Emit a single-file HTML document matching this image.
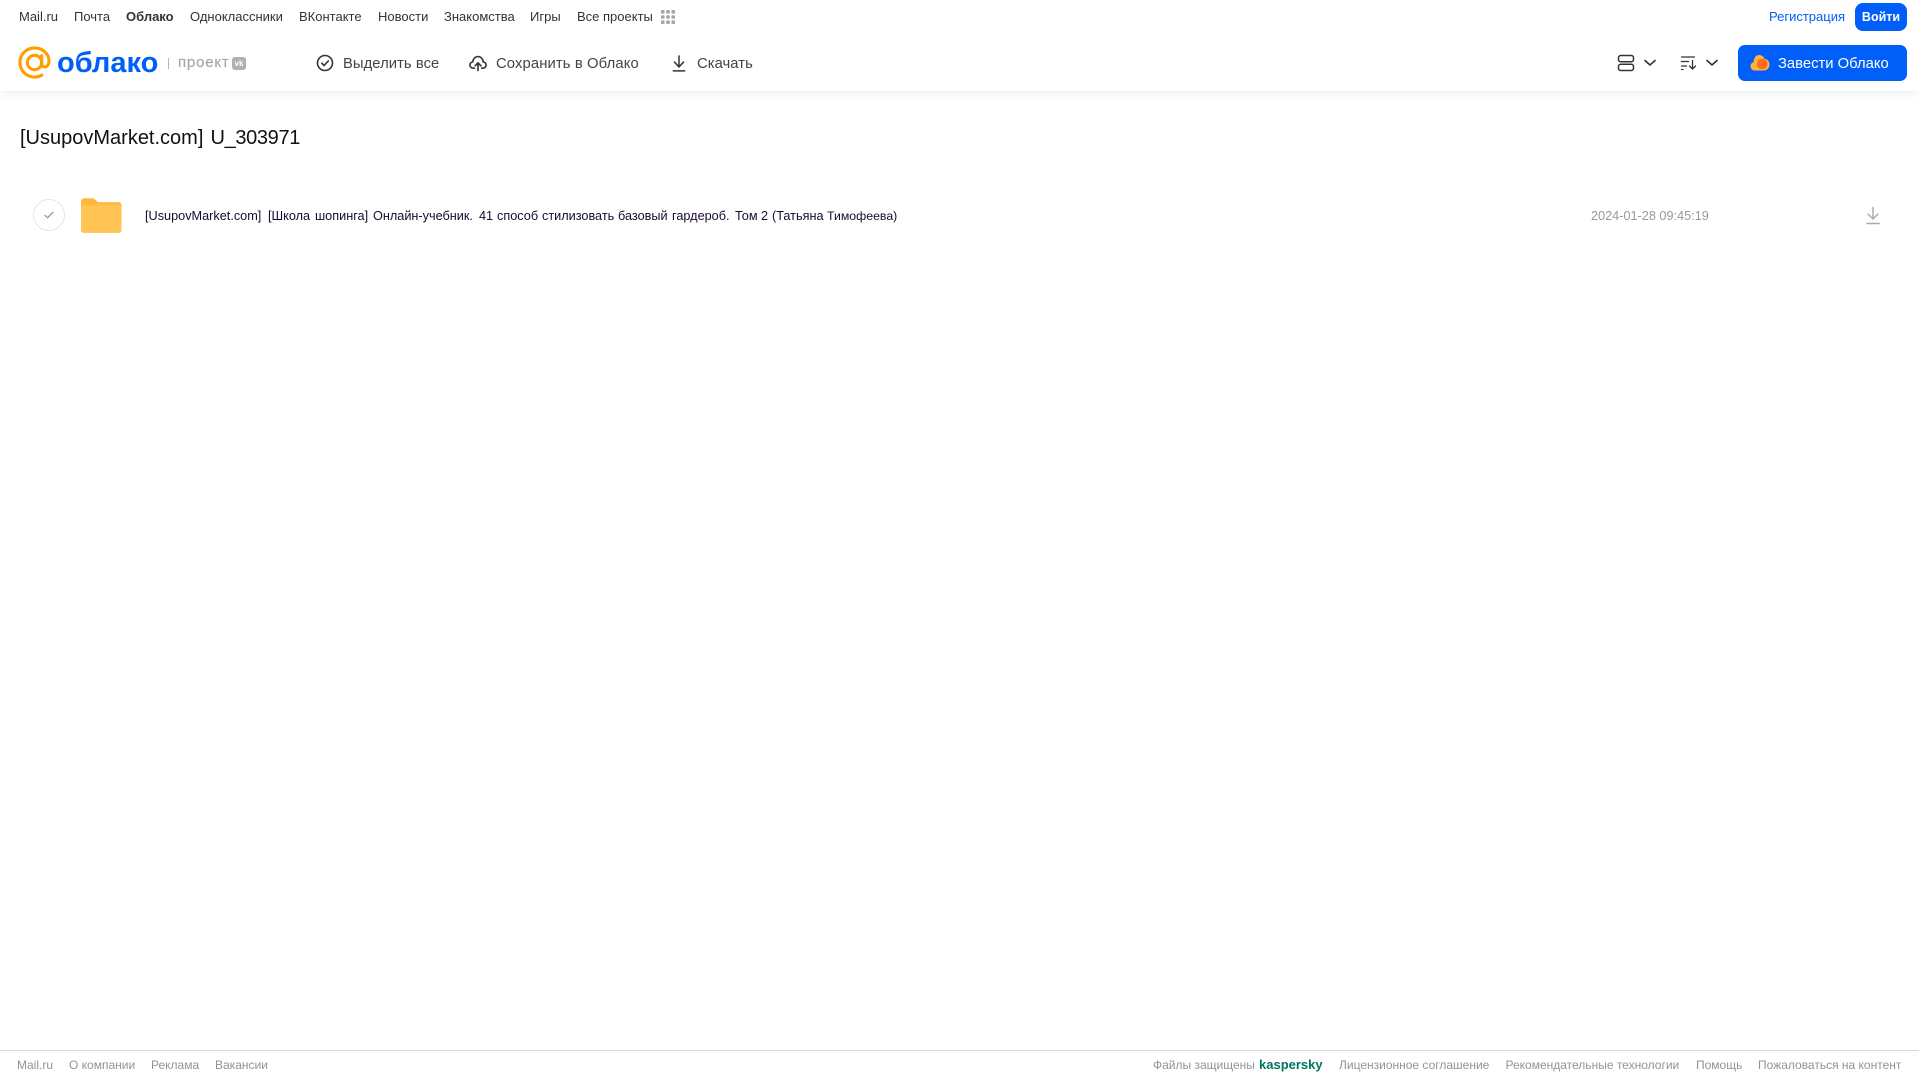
<!DOCTYPE html>
<html lang="ru">
<head>
<meta charset="utf-8">
<title>Облако</title>
<style>
html,body{margin:0;padding:0;background:#fff}
body{position:relative;width:1919px;height:1079px;overflow:hidden;font-family:"Liberation Sans",sans-serif;color:#2c2d2e}
.t{position:absolute;white-space:nowrap;line-height:20px}
.n{top:7px;font-size:13px;color:#333}
.b{top:53.500px;font-size:14.800px;color:#444;letter-spacing:.05px}
.f{top:1055px;font-size:12px;color:#919399}
.r{top:205.500px;font-size:12.700px;color:#1a0a2e}
svg{position:absolute;display:block}
#hd{position:absolute;left:0;top:0;width:1919px;height:91px;background:#fff;box-shadow:0 2px 8px rgba(0,0,0,.07)}
</style>
</head>
<body>
<div id="hd"></div>

<div class="t n" style="left:19px">Mail.ru</div>
<div class="t n" style="left:74px">Почта</div>
<div class="t n" style="left:126px;font-weight:bold">Облако</div>
<div class="t n" style="left:190px">Одноклассники</div>
<div class="t n" style="left:299px">ВКонтакте</div>
<div class="t n" style="left:378px">Новости</div>
<div class="t n" style="left:444px">Знакомства</div>
<div class="t n" style="left:530px">Игры</div>
<div class="t n" style="left:577px">Все проекты</div>
<svg style="left:660px;top:9px" width="16" height="16" viewBox="0 0 16 16" fill="#a5a5a5">
<rect x="1" y="1" width="3.600" height="3.600" rx="1"/><rect x="6.200" y="1" width="3.600" height="3.600" rx="1"/><rect x="11.400" y="1" width="3.600" height="3.600" rx="1"/>
<rect x="1" y="6.200" width="3.600" height="3.600" rx="1"/><rect x="6.200" y="6.200" width="3.600" height="3.600" rx="1"/><rect x="11.400" y="6.200" width="3.600" height="3.600" rx="1"/>
<rect x="1" y="11.400" width="3.600" height="3.600" rx="1"/><rect x="6.200" y="11.400" width="3.600" height="3.600" rx="1"/><rect x="11.400" y="11.400" width="3.600" height="3.600" rx="1"/>
</svg>

<div class="t" style="left:1769px;top:7px;font-size:13px;color:#005ff9">Регистрация</div>
<div style="position:absolute;left:1855px;top:3px;width:52px;height:28px;border-radius:8px;background:#005ff9"></div>
<div class="t" style="left:1855px;top:7px;width:52px;text-align:center;font-size:12.500px;font-weight:bold;color:#fff">Войти</div>

<!-- logo -->
<svg style="left:18px;top:46px" width="33" height="33" viewBox="0 0 34 34" fill="none" stroke="#ff9e00">
<circle cx="17" cy="17" r="7.400" stroke-width="3.200"/>
<path d="M24.400 10v8.500c0 4.400 6.600 4.400 7.400-1.500C32.800 8.500 25.500 2 17 2 8.700 2 2 8.700 2 17s6.700 15 15 15c3 0 5.400-.7 7.600-2" stroke-width="3.200" stroke-linecap="round"/>
</svg>
<div class="t" style="left:57px;top:44.500px;line-height:36px;font-size:29px;font-weight:bold;color:#005ff9">облако</div>
<div style="position:absolute;left:168px;top:58px;width:1px;height:11px;background:#b5b5b5"></div>
<div class="t" style="left:178px;top:52.500px;font-size:15px;color:#a8a8a8;letter-spacing:.8px;-webkit-text-stroke:.2px #a8a8a8">проект</div>
<div style="position:absolute;left:232px;top:57px;width:14px;height:13px;border-radius:3px;background:#b0b0b0;color:#fff;font-size:8px;font-weight:bold;line-height:13px;text-align:center">vk</div>

<!-- toolbar -->
<svg style="left:316px;top:54px" width="18" height="18" viewBox="0 0 18 18" fill="none" stroke="#333" stroke-width="1.600">
<circle cx="9" cy="9" r="7.500"/><path d="M5.800 9.200l2.300 2.300 4.200-4.500" stroke-linecap="round" stroke-linejoin="round"/>
</svg>
<div class="t b" style="left:343px">Выделить все</div>

<svg style="left:469px;top:55px" width="18" height="16.500" viewBox="0 0 20 18" fill="none" stroke="#333" stroke-width="1.800" stroke-linecap="round" stroke-linejoin="round">
<path d="M6 14.500H4.800C2.700 14.500 1 13 1 11c0-1.800 1.300-3.200 3.100-3.500C4.500 4 7 1.500 10 1.500s5.500 2.500 5.900 6c1.800.3 3.100 1.700 3.100 3.500 0 2-1.700 3.500-3.800 3.500H14"/>
<path d="M10 17V9M6.800 11.800L10 8.500l3.200 3.300"/>
</svg>
<div class="t b" style="left:496px;letter-spacing:.12px">Сохранить в Облако</div>

<svg style="left:672px;top:54.500px" width="14" height="17" viewBox="0 0 16 18" preserveAspectRatio="none" fill="none" stroke="#333" stroke-width="1.700" stroke-linecap="round" stroke-linejoin="round">
<path d="M8 1v11.500M2.800 7.500L8 12.700l5.200-5.200"/><path d="M1.500 16.800h13"/>
</svg>
<div class="t b" style="left:697px">Скачать</div>

<!-- view / sort -->
<svg style="left:1617px;top:54px" width="18" height="18" viewBox="0 0 18 18" fill="none" stroke="#333" stroke-width="1.500">
<rect x="1.500" y="1.500" width="15" height="6.200" rx="2.200"/><rect x="1.500" y="10.300" width="15" height="6.200" rx="2.200"/>
</svg>
<svg style="left:1643px;top:58px" width="14" height="10" viewBox="0 0 14 10" fill="none" stroke="#333" stroke-width="1.600" stroke-linecap="round" stroke-linejoin="round"><path d="M2 2.500l5 4.500 5-4.500"/></svg>
<svg style="left:1680px;top:55px" width="18" height="16" viewBox="0 0 18 16" fill="none" stroke="#333" stroke-width="1.300" stroke-linecap="round" stroke-linejoin="round">
<path d="M1.500 2h13M1.500 6.500h7M1.500 11h5M1.500 14.500h1.500"/><path d="M12.500 5.500V14M9.500 11l3 3 3-3"/>
</svg>
<svg style="left:1705px;top:58px" width="14" height="10" viewBox="0 0 14 10" fill="none" stroke="#333" stroke-width="1.600" stroke-linecap="round" stroke-linejoin="round"><path d="M2 2.500l5 4.500 5-4.500"/></svg>

<div style="position:absolute;left:1738px;top:45px;width:169px;height:36px;border-radius:7px;background:#005ff9"></div>
<svg style="left:1750px;top:54px" width="20" height="17" viewBox="0 0 20 17">
<path d="M5 16.500C2.200 16.500 .5 14.500 .5 12.200c0-2 1.300-3.600 3-4C3.800 4 6 1 9 1c2.600 0 4.500 1.500 5.400 3.700 3 .2 5.100 2.700 5.100 5.800 0 3.300-2.500 6-5.700 6z" fill="#ffb23e"/>
<circle cx="12.300" cy="10" r="5.300" fill="#ff6a1f"/>
</svg>
<div class="t" style="left:1778px;top:53.500px;font-size:14.800px;color:#fff">Завести Облако</div>

<!-- title -->
<div class="t" style="left:20px;top:126px;line-height:24px;font-size:20px;color:#111">[UsupovMarket.com]</div>
<div class="t" style="left:210.500px;top:126px;line-height:24px;font-size:20px;color:#111;letter-spacing:-.35px">U_303971</div>

<!-- row -->
<div style="position:absolute;left:33px;top:199px;width:30px;height:30px;border:1px solid #e6e6e6;border-radius:50%"></div>
<svg style="left:42px;top:209px" width="14" height="12" viewBox="0 0 14 12" fill="none" stroke="#999" stroke-width="1.300" stroke-linecap="round" stroke-linejoin="round"><path d="M3 6.300l2.600 2.500L11 3.200"/></svg>
<svg style="left:81px;top:198px" width="40.500" height="35" viewBox="0 0 41 35">
<path d="M0 3.500C0 1.500 1.500 0 3.500 0h8c1.300 0 2.300.5 3.200 1.500L17 4h21c1.700 0 3 1.300 3 3v25c0 1.700-1.300 3-3 3H3c-1.700 0-3-1.300-3-3z" fill="#ffb83d"/>
<path d="M0 9c0-1.100.9-2 2-2h37c1.100 0 2 .9 2 2v23c0 1.700-1.300 3-3 3H3c-1.700 0-3-1.300-3-3z" fill="#ffc454"/>
</svg>
<div class="t r" style="left:145px">[UsupovMarket.com]</div>
<div class="t r" style="left:268px">[Школа</div>
<div class="t r" style="left:315px">шопинга]</div>
<div class="t r" style="left:373px">Онлайн-учебник.</div>
<div class="t r" style="left:479px">41</div>
<div class="t r" style="left:497px">способ</div>
<div class="t r" style="left:542px">стилизовать</div>
<div class="t r" style="left:618px">базовый</div>
<div class="t r" style="left:672px">гардероб.</div>
<div class="t r" style="left:735px">Том</div>
<div class="t r" style="left:761px">2</div>
<div class="t r" style="left:772px">(Татьяна</div>
<div class="t r" style="left:827px;font-size:12.300px">Тимофеева)</div>
<div class="t" style="left:1591px;top:205.500px;font-size:12.700px;color:#999">2024-01-28 09:45:19</div>
<svg style="left:1866px;top:206px" width="14" height="20" viewBox="0 0 14 20" fill="none" stroke="#a8a8a8" stroke-width="1.400" stroke-linecap="round" stroke-linejoin="round">
<path d="M7 1.500v11.500M2 8l5 5 5-5"/><path d="M1 17.500h12" stroke-width="1.600"/>
</svg>

<!-- footer -->
<div style="position:absolute;left:0;top:1050px;width:1919px;height:1px;background:#d8d8d8"></div>
<div class="t f" style="left:17px">Mail.ru</div>
<div class="t f" style="left:69px">О компании</div>
<div class="t f" style="left:151px">Реклама</div>
<div class="t f" style="left:215px">Вакансии</div>
<div class="t f" style="left:1153px">Файлы защищены</div>
<div class="t f" style="left:1259px;font-weight:bold;font-size:13px;color:#00755f">kaspersky</div>
<div class="t f" style="left:1339px">Лицензионное соглашение</div>
<div class="t f" style="left:1505.500px">Рекомендательные технологии</div>
<div class="t f" style="left:1696px">Помощь</div>
<div class="t f" style="left:1758px">Пожаловаться на контент</div>
</body>
</html>
